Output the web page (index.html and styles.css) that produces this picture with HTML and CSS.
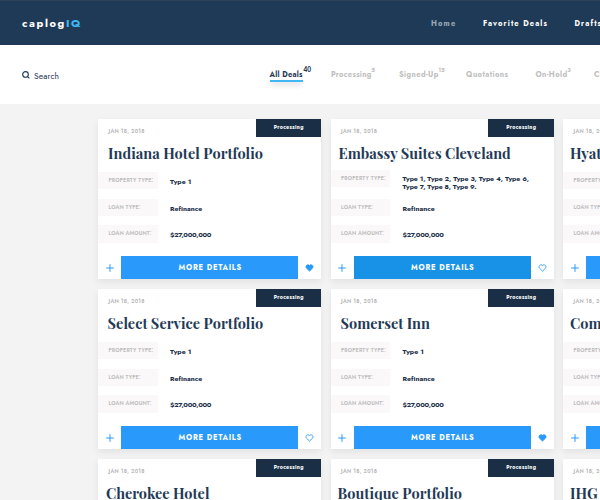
FILE: index.html
```html
<!DOCTYPE html>
<html lang="en">
<head>
<meta charset="utf-8">
<title>caplogIQ</title>
<link rel="stylesheet" href="styles.css">
</head>
<body>
<svg class="defs" aria-hidden="true">
  <symbol id="plus" viewBox="0 0 8 8"><path d="M4 .2V7.8M.2 4H7.8" fill="none" stroke="currentColor" stroke-width="1"/></symbol>
  <symbol id="heart" viewBox="0 0 10 9"><path d="M5 8 1.500 4.600C-.2 2.300 3-.5 5 1.700 7-.5 10.200 2.300 8.500 4.600Z" stroke="currentColor" stroke-width="1" stroke-linejoin="round"/></symbol>
</svg>
<header class="topbar">
  <a class="logo">caplog<span>IQ</span></a>
  <nav class="main-nav"><a class="current">Home</a><a>Favorite Deals</a><a>Drafts</a></nav>
</header>
<section class="filters">
  <label class="search"><svg viewBox="0 0 8 8"><circle cx="3.500" cy="3.400" r="2.800"/><path d="M5.300 5.400 7.400 7.400"/></svg>Search</label>
  <nav class="tabs">
    <a class="tab active">All Deals<sup>40</sup></a>
    <a class="tab processing">Processing<sup>5</sup></a>
    <a class="tab signed">Signed-Up<sup>15</sup></a>
    <a class="tab quotations">Quotations</a>
    <a class="tab hold">On-Hold<sup>3</sup></a>
    <a class="tab closed">Closed</a>
  </nav>
</section>
<main class="deals" id="deals"></main>
<script src="deals.js"></script>
</body>
</html>
```
FILE: styles.css
```css
* { box-sizing: border-box; }
html { overflow: hidden; }
body {
  margin: 0;
  width: 600px;
  height: 500px;
  overflow: hidden;
  background: #f3f3f3;
  color: #1f3a57;
  font-family: Jost, Lato, "Liberation Sans", sans-serif;
  font-weight: 700;
}
.defs { display: block; width: 0; height: 0; }
.topbar {
  display: flex;
  align-items: center;
  height: 45.300px;
  padding: 0 0 0 22px;
  background: #1f3a56;
  border-top: 1px solid #2b4258;
  color: #fff;
  overflow: hidden;
}
.logo { width: 409px; flex: none; font-size: 11px; line-height: 14px; letter-spacing: 1.600px; margin-top: -1px; }
.logo span { color: #3fb8f3; }
.main-nav { display: flex; gap: 26.500px; padding-top: 1px; font-size: 7.500px; line-height: 10px; letter-spacing: 1.110px; white-space: nowrap; }
.main-nav .current { color: #9ba9b7; letter-spacing: 1.150px; }
.filters {
  display: flex;
  height: 59.200px;
  padding: 24.700px 0 0 22px;
  background: #fff;
  overflow: hidden;
}
.search { display: flex; gap: 4px; width: 247.500px; flex: none; font-size: 8.500px; font-weight: 400; line-height: 12px; letter-spacing: .12px; }
.search svg { width: 8px; height: 8px; margin-top: 1px; fill: none; stroke: #1f3a57; stroke-width: 1.100; }
.tabs { display: flex; font-size: 7.500px; line-height: 10px; color: #bfbfbf; white-space: nowrap; }
.tab { position: relative; flex: none; height: 12px; letter-spacing: .3px; }
.tab sup { position: absolute; left: 100%; top: -4px; font-size: 5.500px; line-height: 8px; letter-spacing: 0; margin-left: -.7px; }
.active { width: 33px; margin-right: 28.500px; color: #1f3a57; letter-spacing: .24px; border-bottom: 2px solid #3fb8f3; box-shadow: 0 6px 4px -1px rgba(0, 0, 0, .07); }
.active sup { font-family: Lato, sans-serif; font-weight: 900; font-size: 6.500px; top: -3.500px; margin-left: 1px; letter-spacing: .1px; }
.processing { width: 41px; margin-right: 27px; }
.signed { width: 40px; margin-right: 27px; letter-spacing: .4px; }
.quotations { width: 43px; margin-right: 26.500px; letter-spacing: .41px; }
.hold { width: 32.500px; margin-right: 26px; letter-spacing: .4px; }
.deals {
  display: grid;
  grid-template-columns: repeat(3, 223px);
  grid-auto-rows: 160px;
  gap: 10px 9.500px;
  padding: 14.500px 0 0 98px;
}
.card { display: flex; flex-direction: column; background: #fff; box-shadow: 0 3px 7px rgba(0, 0, 0, .07); }
.card-head { display: flex; justify-content: space-between; height: 18px; padding-left: 10.500px; }
.date { padding-top: 8.500px; font-size: 5.300px; font-weight: 600; line-height: 8px; letter-spacing: .3px; color: #b5b5b5; }
.badge { width: 65.500px; height: 17.700px; padding-left: 1px; font-size: 5.300px; line-height: 17.500px; letter-spacing: .33px; text-align: center; color: #fff; background: #1a2f45; }
.title { margin: 0; height: 35px; padding: 6px 0 0 10px; font: 700 14.500px/20px "Playfair Display", "Liberation Serif", serif; color: #1f3a57; white-space: nowrap; }
.indiana { letter-spacing: .05px; }
.embassy { padding-left: 8px; }
.hyatt, .comfort, .ihg { padding-left: 7px; }
.select { padding-left: 9.500px; letter-spacing: .05px; }
.cherokee { padding-left: 8px; }
.boutique { padding-left: 7px; letter-spacing: .05px; }
.facts { display: grid; grid-auto-rows: 17.200px; gap: 9.500px; margin: 0; }
.fact { display: flex; }
.fact dt { width: 59.500px; flex: none; padding-left: 10.500px; font-size: 5.300px; font-weight: 600; line-height: 17.500px; letter-spacing: .17px; color: #bdbbbc; background: #faf8f9; white-space: nowrap; }
.fact dd { margin: 0; padding: 6px 0 0 12.500px; font-size: 7px; line-height: 8px; letter-spacing: 0; color: #1a2f48; white-space: nowrap; }
.fact .amount { letter-spacing: -.34px; }
.multi dt { position: relative; top: -2px; }
.multi dd { padding-top: 3.300px; line-height: 8.200px; letter-spacing: -.11px; }
.actions { display: grid; grid-template-columns: 23px 177px 23px; grid-template-rows: 22.500px; align-items: center; height: 22.500px; margin-top: auto; color: #2999fb; }
.actions svg { justify-self: center; }
.icon-plus { width: 8px; height: 8px; }
.icon-heart { width: 9px; height: 8px; fill: none; }
.icon-heart.saved { fill: currentColor; }
.more { height: 22.500px; overflow: hidden; padding-left: 1.500px; font-size: 7.500px; line-height: 24px; letter-spacing: .73px; text-align: center; color: #fff; background: #2999fb; }
.more.pressed { background: #1892e6; }
```
FILE: deals.js
```js
const deals = [
  { name: 'Indiana Hotel Portfolio', key: 'indiana', saved: true },
  { name: 'Embassy Suites Cleveland', key: 'embassy', types: 'Type 1, Type 2, Type 3, Type 4, Type 6,<br>Type 7, Type 8, Type 9.', pressed: true },
  { name: 'Hyatt Place', key: 'hyatt' },
  { name: 'Select Service Portfolio', key: 'select' },
  { name: 'Somerset Inn', key: 'somerset', saved: true },
  { name: 'Comfort Inn', key: 'comfort' },
  { name: 'Cherokee Hotel', key: 'cherokee' },
  { name: 'Boutique Portfolio', key: 'boutique' },
  { name: 'IHG Portfolio', key: 'ihg' }
];

document.getElementById('deals').innerHTML = deals.map(d => `
  <article class="card">
    <div class="card-head"><span class="date">JAN 18, 2018</span><span class="badge">Processing</span></div>
    <h2 class="title ${d.key}">${d.name}</h2>
    <dl class="facts">
      <div class="fact ${d.types ? 'multi' : ''}"><dt>PROPERTY TYPE:</dt><dd>${d.types || 'Type 1'}</dd></div>
      <div class="fact"><dt>LOAN TYPE:</dt><dd>Refinance</dd></div>
      <div class="fact"><dt>LOAN AMOUNT:</dt><dd class="amount">$27,000,000</dd></div>
    </dl>
    <div class="actions">
      <svg class="icon-plus"><use href="#plus"/></svg>
      <a class="more ${d.pressed ? 'pressed' : ''}">MORE DETAILS</a>
      <svg class="icon-heart ${d.saved ? 'saved' : ''}"><use href="#heart"/></svg>
    </div>
  </article>`).join('');
```
